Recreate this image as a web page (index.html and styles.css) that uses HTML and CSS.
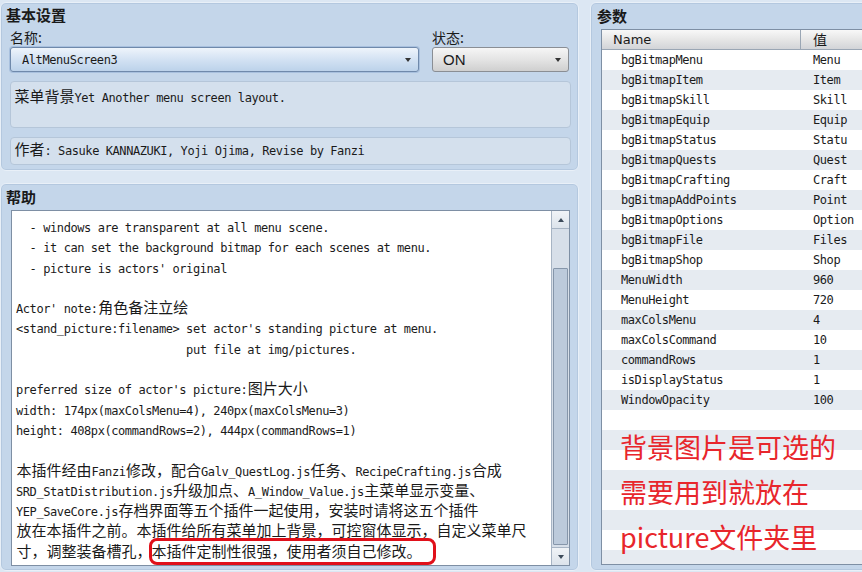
FILE: index.html
```html
<!DOCTYPE html>
<html>
<head>
<meta charset="utf-8">
<link rel="stylesheet" href="styles.css">
</head>
<body>
<div class="app">
  <div class="left">
    <section class="panel basic">
      <h2 class="title">基本设置</h2>
      <div class="field-row">
        <div class="field name-field">
          <div class="label">名称:</div>
          <div class="select select-blue"><span class="mono">AltMenuScreen3</span><i class="arrow"></i></div>
        </div>
        <div class="field status-field">
          <div class="label">状态:</div>
          <div class="select select-grey"><span class="on">ON</span><i class="arrow"></i></div>
        </div>
      </div>
      <div class="box desc mono"><span class="c">菜单背景</span>Yet Another menu screen layout.</div>
      <div class="box author mono"><span class="c">作者</span>: Sasuke KANNAZUKI, Yoji Ojima, Revise by Fanzi</div>
    </section>
    <section class="panel help">
      <h2 class="title">帮助</h2>
      <div class="textarea">
        <div class="text mono">  - windows are transparent at all menu scene.
  - it can set the background bitmap for each scenes at menu.
  - picture is actors' original

Actor' note:<span class="c">角色备注立绘</span>
&lt;stand_picture:filename&gt; set actor's standing picture at menu.
                         put file at img/pictures.

preferred size of actor's picture:<span class="c">图片大小</span>
width: 174px(maxColsMenu=4), 240px(maxColsMenu=3)
height: 408px(commandRows=2), 444px(commandRows=1)

<span class="c">本插件经由</span>Fanzi<span class="c">修改，配合</span>Galv_QuestLog.js<span class="c">任务、</span>RecipeCrafting.js<span class="c">合成</span>
SRD_StatDistribution.js<span class="c">升级加点、</span>A_Window_Value.js<span class="c">主菜单显示变量、</span>
YEP_SaveCore.js<span class="c">存档界面等五个插件一起使用，安装时请将这五个插件</span>
<span class="c">放在本插件之前。本插件给所有菜单加上背景，可控窗体显示，自定义菜单尺</span>
<span class="c">寸，调整装备槽孔，<span class="mark">本插件定制性很强，使用者须自己修改。</span></span></div>
        <div class="scrollbar">
          <div class="sb-btn"><i class="up"></i></div>
          <div class="sb-track"><div class="sb-thumb"></div></div>
          <div class="sb-btn"><i class="down"></i></div>
        </div>
      </div>
    </section>
  </div>
  <section class="panel params">
    <h2 class="title">参数</h2>
    <div class="table">
      <div class="thead"><div class="th th-name">Name</div><div class="th th-val">值</div></div>
      <div class="tbody mono">
        <div class="tr"><span class="td-name">bgBitmapMenu</span><span class="td-val">Menu</span></div>
        <div class="tr"><span class="td-name">bgBitmapItem</span><span class="td-val">Item</span></div>
        <div class="tr"><span class="td-name">bgBitmapSkill</span><span class="td-val">Skill</span></div>
        <div class="tr"><span class="td-name">bgBitmapEquip</span><span class="td-val">Equip</span></div>
        <div class="tr"><span class="td-name">bgBitmapStatus</span><span class="td-val">Statu</span></div>
        <div class="tr"><span class="td-name">bgBitmapQuests</span><span class="td-val">Quest</span></div>
        <div class="tr"><span class="td-name">bgBitmapCrafting</span><span class="td-val">Craft</span></div>
        <div class="tr"><span class="td-name">bgBitmapAddPoints</span><span class="td-val">Point</span></div>
        <div class="tr"><span class="td-name">bgBitmapOptions</span><span class="td-val">Option</span></div>
        <div class="tr"><span class="td-name">bgBitmapFile</span><span class="td-val">Files</span></div>
        <div class="tr"><span class="td-name">bgBitmapShop</span><span class="td-val">Shop</span></div>
        <div class="tr"><span class="td-name">MenuWidth</span><span class="td-val">960</span></div>
        <div class="tr"><span class="td-name">MenuHeight</span><span class="td-val">720</span></div>
        <div class="tr"><span class="td-name">maxColsMenu</span><span class="td-val">4</span></div>
        <div class="tr"><span class="td-name">maxColsCommand</span><span class="td-val">10</span></div>
        <div class="tr"><span class="td-name">commandRows</span><span class="td-val">1</span></div>
        <div class="tr"><span class="td-name">isDisplayStatus</span><span class="td-val">1</span></div>
        <div class="tr"><span class="td-name">WindowOpacity</span><span class="td-val">100</span></div>
        <div class="tr"></div><div class="tr"></div><div class="tr"></div><div class="tr"></div>
        <div class="tr"></div><div class="tr"></div><div class="tr"></div><div class="tr"></div>
      </div>
      <div class="note">背景图片是可选的<br>需要用到就放在<br>picture文件夹里</div>
    </div>
  </section>
</div>
</body>
</html>
```
FILE: styles.css
```css
html, body { margin: 0; padding: 0; }
body {
  background: #dce7f3;
  font-family: "DejaVu Sans", "Noto Sans CJK SC", sans-serif;
  color: #1a1a1a;
}
.app {
  display: flex;
  gap: 11px;
  width: 862px;
  height: 572px;
  overflow: hidden;
  padding-top: 2px;
  box-sizing: border-box;
}
.left {
  flex: none;
  width: 579px;
  display: flex;
  flex-direction: column;
  gap: 12px;
}
.panel {
  background: #c4d6ea;
  border: 1px solid #e9f0f8;
  border-radius: 6px;
  box-shadow: inset 0 0 0 1px #b4c8df;
  box-sizing: border-box;
}
.title {
  margin: 0;
  font-family: "Noto Sans CJK SC", sans-serif;
  font-size: 15px;
  font-weight: bold;
  color: #1a1a1a;
}
.mono {
  font-family: "DejaVu Sans Mono", "Noto Sans CJK SC", monospace;
  font-size: 12px;
  letter-spacing: -0.42px;
}
.c {
  font-family: "Noto Sans CJK SC", sans-serif;
  font-size: 15px;
  line-height: 14px;
  letter-spacing: 0;
  margin-left: 0.5px;
}

/* basic panel */
.basic {
  flex: none;
  height: 169px;
  padding: 0 8px 0 9px;
}
.basic .title {
  height: 24px;
  line-height: 24px;
  margin-left: -4px;
}
.field-row {
  display: flex;
  gap: 13px;
}
.name-field { flex: 1; }
.status-field { width: 137px; margin-right: 1px; }
.label {
  height: 20px;
  line-height: 20px;
  font-family: "Noto Sans CJK SC", sans-serif;
  font-size: 14px;
}
.select {
  position: relative;
  height: 25px;
  box-sizing: border-box;
  border-radius: 3px;
  display: flex;
  align-items: center;
  padding-left: 11px;
}
.select-blue {
  border: 1px solid #6f89ab;
  background: linear-gradient(#eef4fb, #d3e2f3 50%, #bcd2ea);
  box-shadow: 0 0 0 1px #a8c0de;
}
.select-grey {
  border: 1px solid #8a8e94;
  background: linear-gradient(#f6f6f6, #e2e2e2 55%, #cfcfcf);
  padding-left: 10px;
}
.on {
  font-family: "Liberation Sans", sans-serif;
  font-size: 15px;
}
.arrow {
  position: absolute;
  right: 7px;
  top: 10px;
  width: 0;
  height: 0;
  border-left: 3px solid transparent;
  border-right: 3px solid transparent;
  border-top: 4px solid #333;
}
.box {
  margin-top: 9px;
  background: #d4e0ed;
  border: 1px solid #b5c6d9;
  border-radius: 4px;
  box-sizing: border-box;
  padding-left: 3px;
  line-height: 20px;
  color: #1a1a1a;
}
.desc { height: 47px; padding-top: 6px; margin-right: -1px; }
.author { height: 28px; padding-top: 3px; margin-right: -1px; }

/* help panel */
.help {
  flex: 1;
  min-height: 0;
  padding: 0 8px 4px 10px;
  display: flex;
  flex-direction: column;
  margin-bottom: 1px;
}
.help .title {
  height: 26px;
  line-height: 26px;
  margin-left: -5px;
}
.textarea {
  flex: 1;
  min-height: 0;
  display: flex;
  background: #fff;
  border: 1px solid #7e8fa4;
  overflow: hidden;
}
.text {
  flex: 1;
  white-space: pre;
  line-height: 20.3px;
  padding: 7px 0 0 4px;
  overflow: hidden;
  color: #1a1a1a;
}
.mark {
  position: relative;
  margin-left: 0;
}
.mark::after {
  content: "";
  position: absolute;
  left: -3px;
  right: -14px;
  top: -2px;
  bottom: -4px;
  border: 3px solid #e0101a;
  border-radius: 8px;
}
.scrollbar {
  flex: none;
  width: 17px;
  display: flex;
  flex-direction: column;
  background: #d7dfe9;
  border-left: 1px solid #a7b4c4;
}
.sb-btn {
  height: 17px;
  background: linear-gradient(#f0f3f7, #dce3eb);
  border-bottom: 1px solid #a7b4c4;
  display: flex;
  align-items: center;
  justify-content: center;
}
.sb-btn:last-child { border-bottom: 0; border-top: 1px solid #a7b4c4; }
.up, .down {
  width: 0; height: 0;
  border-left: 3px solid transparent;
  border-right: 3px solid transparent;
}
.up { border-bottom: 4px solid #3c4a5a; }
.down { border-top: 4px solid #3c4a5a; }
.sb-track {
  flex: 1;
  padding: 39px 1px 2px 1px;
  display: flex;
}
.sb-thumb {
  flex: 1;
  background: #bccadb;
  border: 1px solid #8696aa;
  border-radius: 1px;
}

/* params panel */
.params {
  flex: none;
  width: 290px;
  height: 569px;
  padding: 0 0 5px 10px;
  display: flex;
  flex-direction: column;
}
.params .title {
  height: 26px;
  line-height: 26px;
  margin-left: -4px;
}
.table {
  position: relative;
  flex: 1;
  background: #fff;
  border: 1px solid #7e8fa4;
  overflow: hidden;
}
.thead {
  display: flex;
  height: 19px;
  background: linear-gradient(#f8f8f8, #e6e6e6 50%, #d2d4d8);
  border-bottom: 1px solid #9aa6b4;
}
.th {
  font-size: 13px;
  line-height: 19px;
  color: #1a1a1a;
}
.th-name {
  width: 187px;
  padding-left: 11px;
  border-right: 1px solid #9aa6b4;
}
.th-val {
  padding-left: 12px;
  font-family: "Noto Sans CJK SC", sans-serif;
  font-size: 14px;
}
.tr {
  display: flex;
  height: 20px;
  line-height: 20px;
  color: #1a1a1a;
}
.tr:nth-child(even) { background: #e6ebf1; }
.td-name { width: 192px; padding-left: 19px; }
.td-val { padding-left: 0; }
.note {
  position: absolute;
  left: 18px;
  top: 394px;
  font-family: "Noto Sans CJK SC", sans-serif;
  font-size: 27px;
  line-height: 45px;
  color: #e8262c;
}
```
